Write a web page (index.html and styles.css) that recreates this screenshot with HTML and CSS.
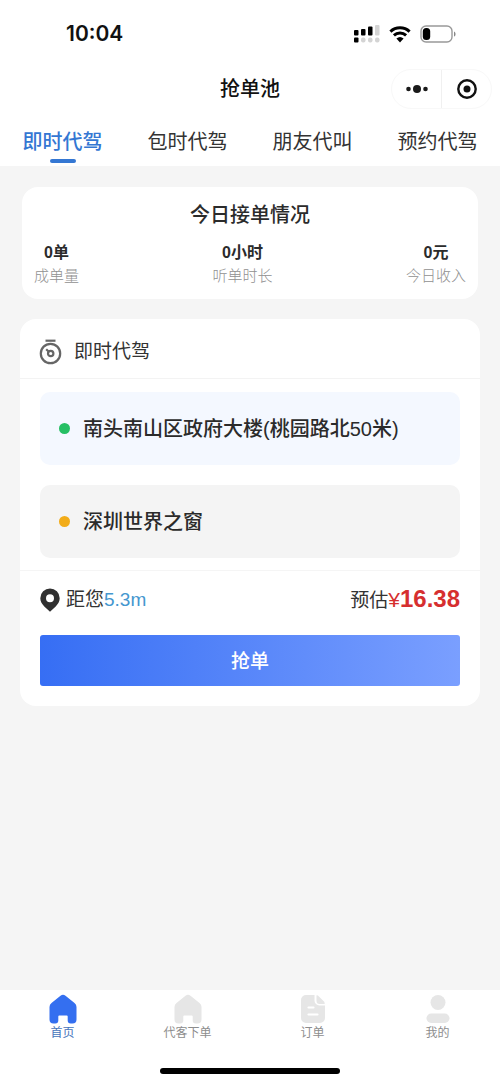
FILE: index.html
```html
<!DOCTYPE html>
<html lang="zh-CN">
<head>
<meta charset="utf-8">
<meta name="viewport" content="width=device-width, initial-scale=1">
<title>抢单池</title>
<link rel="stylesheet" href="styles.css">
</head>
<body>
<div class="app">
  <header class="top">
    <div class="status">
      <span class="clock">10:04</span>
      <div class="indicators">
        <svg width="26" height="18" viewBox="0 0 26 18" aria-hidden="true">
          <g fill="#000"><rect x="0" y="5" width="4.500" height="5.500" rx="1"/><rect x="7" y="4" width="4.500" height="6.500" rx="1"/><rect x="14" y="1.500" width="4.500" height="9" rx="1"/><rect x="0" y="12.500" width="4.500" height="5" rx="1"/></g>
          <g fill="#d4d4d4"><rect x="21" y="0" width="4.500" height="10.500" rx="1"/><rect x="7" y="12.500" width="4.500" height="5" rx="2"/><rect x="14" y="12.500" width="4.500" height="5" rx="2"/><rect x="21" y="12.500" width="4.500" height="5" rx="2"/></g>
        </svg>
        <svg width="22" height="17" viewBox="0 0 22 17" aria-hidden="true">
          <path d="M1.400 5.600a14 14 0 0 1 19.200 0M4.900 9.300a9 9 0 0 1 12.200 0" fill="none" stroke="#000" stroke-width="3"/>
          <path d="M7.400 12.600a5.400 5.400 0 0 1 7.200 0L11 16.500z" fill="#000"/>
        </svg>
        <svg width="36" height="18" viewBox="0 0 36 18" aria-hidden="true">
          <rect x="1" y="1" width="31" height="16" rx="5" fill="#fff" stroke="#999" stroke-width="1.400"/>
          <rect x="2.800" y="3" width="7.400" height="12" rx="3.500" fill="#000"/>
          <path d="M34 6.400c2 .8 2 4.400 0 5.200z" fill="#888"/>
        </svg>
      </div>
    </div>
    <div class="nav">
      <h1 class="title">抢单池</h1>
      <div class="capsule">
        <button class="cap-btn" type="button" aria-label="更多">
          <svg width="24" height="10" viewBox="0 0 24 10"><g fill="#1a1a1a"><circle cx="3.500" cy="5" r="2.300"/><circle cx="12" cy="5" r="4"/><circle cx="20.500" cy="5" r="2.300"/></g></svg>
        </button>
        <button class="cap-btn" type="button" aria-label="关闭">
          <svg width="22" height="22" viewBox="0 0 22 22"><circle cx="11" cy="11" r="8.700" fill="none" stroke="#111" stroke-width="2.400"/><circle cx="11" cy="11" r="3.500" fill="#111"/></svg>
        </button>
      </div>
    </div>
    <nav class="tabs">
      <a class="tab active" href="#now">即时代驾</a>
      <a class="tab" href="#hourly">包时代驾</a>
      <a class="tab" href="#friend">朋友代叫</a>
      <a class="tab" href="#booking">预约代驾</a>
    </nav>
  </header>

  <main class="content">
    <section class="summary">
      <h2 class="summary-title">今日接单情况</h2>
      <div class="stats">
        <div class="stat"><strong class="value">0单</strong><span class="label">成单量</span></div>
        <div class="stat"><strong class="value">0小时</strong><span class="label">听单时长</span></div>
        <div class="stat"><strong class="value">0元</strong><span class="label">今日收入</span></div>
      </div>
    </section>

    <article class="order">
      <div class="order-head">
        <svg width="23" height="26" viewBox="0 0 23 26" fill="none" stroke="#666" stroke-width="2.200" aria-hidden="true">
          <path d="M6.500 1.700h10"/><circle cx="11.500" cy="14.500" r="9.700"/><circle cx="11.700" cy="14.500" r="2.700"/><path d="M7.200 10.300l2.700 2.500"/>
        </svg>
        <span>即时代驾</span>
      </div>
      <div class="route">
        <div class="place from"><i class="dot"></i><span>南头南山区政府大楼(桃园路北50米)</span></div>
        <div class="place to"><i class="dot"></i><span>深圳世界之窗</span></div>
      </div>
      <div class="order-foot">
        <div class="info">
          <div class="distance">
            <svg width="20" height="24" viewBox="0 0 20 24" aria-hidden="true"><path fill="#303030" fill-rule="evenodd" d="M10 .5A9.700 9.700 0 0 0 .3 10.200c0 3.300 1.700 5.800 4 8.200L10 23.700l5.700-5.300c2.300-2.400 4-4.900 4-8.200A9.700 9.700 0 0 0 10 .5zm0 5.700a4 4 0 1 1 0 8 4 4 0 0 1 0-8z"/></svg>
            <span>距您<span class="meters">5.3m</span></span>
          </div>
          <div class="price">预估<span class="yen">¥</span><strong class="amount">16.38</strong></div>
        </div>
        <button class="grab" type="button">抢单</button>
      </div>
    </article>
  </main>

  <footer class="bottom">
    <nav class="menu">
      <a class="item current" href="#home">
        <svg width="28" height="30" viewBox="0 0 28 30" aria-hidden="true"><path fill="currentColor" d="M11.500 1.700a4 4 0 0 1 5 0l9 7.300a5 5 0 0 1 2 4v12.500a4 4 0 0 1-4 4h-1.800a3 3 0 0 1-3-3V22.500q0-1-1-1h-7.400q-1 0-1 1v4a3 3 0 0 1-3 3H4.500a4 4 0 0 1-4-4V13a5 5 0 0 1 2-4z"/></svg>
        <span>首页</span>
      </a>
      <a class="item" href="#create">
        <svg class="pale" width="28" height="30" viewBox="0 0 28 30" aria-hidden="true"><path fill="currentColor" d="M11.500 1.700a4 4 0 0 1 5 0l9 7.300a5 5 0 0 1 2 4v12.500a4 4 0 0 1-4 4h-1.800a3 3 0 0 1-3-3V22.500q0-1-1-1h-7.400q-1 0-1 1v4a3 3 0 0 1-3 3H4.500a4 4 0 0 1-4-4V13a5 5 0 0 1 2-4z"/></svg>
        <span>代客下单</span>
      </a>
      <a class="item" href="#orders">
        <svg class="pale" width="28" height="30" viewBox="0 0 28 30" aria-hidden="true"><path fill="currentColor" d="M7 1h8.500v5.500a5 5 0 0 0 5 5H26v12.500a5 5 0 0 1-5 5H7a5 5 0 0 1-5-5V6a5 5 0 0 1 5-5z"/><path fill="currentColor" d="M17.500 1.300c1 0 1.500.3 2.200 1l5 5c.8.800 1 1.500 1 2.700h-5.200a3 3 0 0 1-3-3z"/><path d="M9.500 13.500h5M9.500 20.500h9" stroke="#fff" stroke-width="2.200" stroke-linecap="round"/></svg>
        <span>订单</span>
      </a>
      <a class="item" href="#me">
        <svg class="pale" width="28" height="30" viewBox="0 0 28 30" aria-hidden="true"><circle cx="14" cy="8.500" r="7.500" fill="currentColor"/><rect x="2.500" y="19.500" width="23" height="9.500" rx="4.700" fill="currentColor"/></svg>
        <span>我的</span>
      </a>
    </nav>
    <div class="home-bar"></div>
  </footer>
</div>
</body>
</html>
```
FILE: styles.css
```css
* { box-sizing: border-box; }
body {
  margin: 0;
  background: #f5f5f5;
  color: #2b2b2b;
  font-family: "Liberation Sans", "Noto Sans CJK SC", sans-serif;
}
h1, h2 { margin: 0; }
a { color: inherit; text-decoration: none; }
button { border: 0; padding: 0; background: none; font-family: inherit; cursor: pointer; }
svg { display: block; flex: none; }
.app { min-height: 100vh; display: flex; flex-direction: column; }

.top { background: #fff; }
.status {
  display: flex;
  justify-content: space-between;
  align-items: center;
  height: 68px;
  padding: 0 44px 0 66px;
}
.clock { font: 600 21px/28px Inter, sans-serif; color: #111; }
.indicators { display: flex; align-items: center; gap: 9px; }
.nav {
  display: grid;
  grid-template-columns: 1fr auto 1fr;
  align-items: center;
  height: 42px;
  padding: 0 8px;
}
.title { grid-column: 2; font-size: 20px; line-height: 28px; font-weight: 500; color: #111; }
.capsule {
  justify-self: end;
  display: flex;
  width: 101px;
  height: 40px;
  border: 1px solid #f8f8f8;
  border-radius: 20px;
}
.cap-btn { flex: 1; display: flex; align-items: center; justify-content: center; }
.cap-btn + .cap-btn { border-left: 1px solid #f0f0f0; }
.tabs { display: flex; height: 56px; padding-top: 18px; }
.tab {
  flex: 1;
  display: flex;
  flex-direction: column;
  align-items: center;
  gap: 2px;
  font-size: 20px;
  line-height: 29px;
  color: #333;
}
.tab.active { color: #3477d3; font-weight: 500; }
.tab.active::after { content: ""; width: 26px; height: 4px; border-radius: 2px; background: #3477d3; }

.content { flex: 1; display: flex; flex-direction: column; gap: 20px; padding: 21px 20px 20px; }
.summary { margin: 0 2px; padding: 13px 12px 12px; border-radius: 16px; background: #fff; }
.summary-title { font-size: 20px; line-height: 30px; font-weight: 500; text-align: center; }
.stats { display: flex; justify-content: space-between; margin-top: 11px; }
.stat { display: flex; flex-direction: column; align-items: center; line-height: 23px; }
.value { font-size: 16px; font-weight: 600; }
.label { font-size: 15px; color: #909090; font-weight: 300; }

.order { border-radius: 16px; background: #fff; }
.order-head {
  display: flex;
  align-items: center;
  gap: 12px;
  height: 60px;
  padding: 7px 19px 0;
  border-bottom: 1px solid #f3f3f3;
  font-size: 19px;
  line-height: 28px;
  color: #333;
}
.route { display: flex; flex-direction: column; gap: 20px; padding: 13px 20px 12px; }
.place {
  display: flex;
  align-items: center;
  gap: 13px;
  min-height: 73px;
  padding: 12px 19px;
  border-radius: 10px;
  font-size: 20px;
  line-height: 28px;
  font-weight: 500;
}
.from { background: #f4f8ff; }
.to { background: #f4f4f4; }
.dot { flex: none; width: 11px; height: 11px; border-radius: 50%; }
.from .dot { background: #26bf64; }
.to .dot { background: #f2ac19; }
.order-foot { padding: 13px 20px 20px; border-top: 1px solid #f5f5f5; }
.info { display: flex; justify-content: space-between; align-items: center; font-size: 19px; line-height: 30px; color: #333; }
.distance { display: flex; align-items: center; gap: 6px; }
.meters { color: #4597cf; }
.price { display: flex; align-items: baseline; }
.yen, .amount { color: #d62f2f; }
.yen { font-size: 21px; }
.amount { font-size: 24px; font-weight: 700; }
.grab {
  display: block;
  width: 100%;
  height: 51px;
  margin-top: 19px;
  padding-bottom: 2px;
  border-radius: 3px;
  background: linear-gradient(90deg, #366ef4, #7a9fff);
  color: #fff;
  font-size: 19px;
  font-weight: 500;
}

.bottom { background: #fff; }
.menu { display: flex; height: 78px; padding-top: 4px; }
.item { flex: 1; display: flex; flex-direction: column; align-items: center; font-size: 12px; line-height: 19px; color: #8d8d8d; }
.item.current { color: #4774bb; }
.item.current svg { color: #346ff0; }
.pale { color: #e6e6e6; }
.home-bar { width: 36%; height: 6px; margin: 0 auto 10px; border-radius: 3px; background: #000; }
```
